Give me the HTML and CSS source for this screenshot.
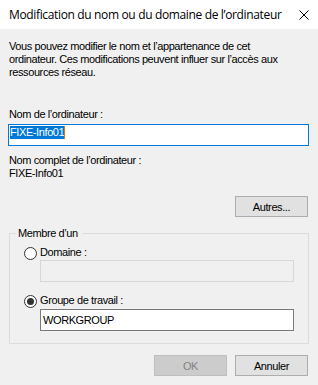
FILE: index.html
```html
<!DOCTYPE html>
<html lang="fr">
    <head>
        <meta charset="UTF-8">
        <meta name="viewport" content="width=device-width, initial-scale=1.0">
        <title>Modification du nom ou du domaine de l'ordinateur</title>
        <link rel="stylesheet" href="styles.css">
    </head>
    <body>
        <div class="titlebar">
            <span class="title">Modification du nom ou du domaine de l’ordinateur</span>
            <svg class="close" width="10" height="10" viewBox="0 0 10 10">
                <path d="M0.5 0.5 L9.5 9.5 M9.5 0.5 L0.5 9.5" stroke="#000" stroke-width="1" fill="none"/>
            </svg>
        </div>
        <div class="content">
            <p class="intro">Vous pouvez modifier le nom et l’appartenance de cet ordinateur. Ces modifications peuvent influer sur l’accès aux ressources réseau.</p>

            <div class="label">Nom de l’ordinateur :</div>
            <div class="textbox focused"><span class="selection">FIXE-Info01</span><span class="caret"></span></div>

            <div class="fullname">Nom complet de l’ordinateur :<br>FIXE-Info01</div>

            <div class="buttons more">
                <button class="button">Autres...</button>
            </div>

            <fieldset class="group">
                <legend>Membre d’un</legend>
                <div class="group-inner">
                    <div class="radio-row">
                        <span class="radio"></span>
                        <span>Domaine :</span>
                    </div>
                    <div class="textbox small disabled"></div>

                    <div class="radio-row second">
                        <span class="radio checked"></span>
                        <span>Groupe de travail :</span>
                    </div>
                    <div class="textbox small workgroup">WORKGROUP</div>
                </div>
            </fieldset>

            <div class="buttons bottom">
                <button class="button" disabled>OK</button>
                <button class="button">Annuler</button>
            </div>
        </div>
    </body>
</html>
```

FILE: styles.css
```css
body {
    margin: 0;
    background: #f0f0f0;
    color: #000;
    font-family: "Liberation Sans", Arial, sans-serif;
    font-size: 11px;
    line-height: 13px;
    letter-spacing: -0.4px;
}

.titlebar {
    height: 29px;
    background: #fff;
    display: flex;
    align-items: center;
    justify-content: space-between;
    padding: 0 9px 0 9px;
}

.title {
    font-family: "Open Sans", "Noto Sans", sans-serif;
    font-size: 12px;
    line-height: 16px;
    letter-spacing: -0.35px;
    padding-top: 1px;
}

.close {
    display: block;
}

.content {
    padding: 0 9px 0 9px;
}

.intro {
    margin: 11px 0 0 0;
    max-width: 288px;
}

.label {
    margin-top: 29px;
}

.textbox {
    box-sizing: border-box;
    height: 22px;
    background: #fff;
    border: 1px solid #7a7a7a;
    white-space: nowrap;
}

.textbox.focused {
    margin: 3px 0 0 -1px;
    border-color: #0078d7;
    padding: 1px 0 0 1px;
    display: flex;
    align-items: flex-start;
}

.selection {
    background: #0078d7;
    color: #fff;
}

.caret {
    width: 1px;
    height: 13px;
    background: #e07800;
}

.fullname {
    margin-top: 8px;
}

.buttons {
    display: flex;
    justify-content: flex-end;
    gap: 8px;
    padding-right: 1px;
}

.more {
    margin-top: 16px;
}

.button {
    box-sizing: border-box;
    width: 73px;
    height: 21px;
    margin: 0;
    padding: 0;
    background: #e1e1e1;
    border: 1px solid #adadad;
    border-radius: 0;
    font-family: inherit;
    font-size: 11px;
    letter-spacing: -0.4px;
    color: #000;
}

.button:disabled {
    background: #cccccc;
    border-color: #bfbfbf;
    color: #838383;
}

.group {
    box-sizing: border-box;
    margin: 10px 0 0 0;
    padding: 0;
    border: 1px solid #dcdcdc;
    min-width: 0;
}

.group legend {
    margin-left: 6px;
    padding: 0 4px 0 2px;
}

.group-inner {
    padding: 6px 14px 12px 14px;
}

.radio-row {
    display: flex;
    align-items: center;
    gap: 3px;
    height: 13px;
}

.radio-row.second {
    margin-top: 12px;
}

.radio {
    box-sizing: border-box;
    width: 13px;
    height: 13px;
    border: 1px solid #333;
    border-radius: 50%;
    background: #fff;
    margin-top: 2px;
    display: flex;
    align-items: center;
    justify-content: center;
}

.radio.checked::after {
    content: "";
    width: 7px;
    height: 7px;
    border-radius: 50%;
    background: #333;
}

.textbox.small {
    margin-left: 16px;
}

.textbox.disabled {
    margin-top: 1px;
    background: #f0f0f0;
    border-color: #d7d7d7;
}

.textbox.workgroup {
    margin-top: 2px;
    padding: 4px 0 0 2px;
}

.bottom {
    margin-top: 11px;
}
```
